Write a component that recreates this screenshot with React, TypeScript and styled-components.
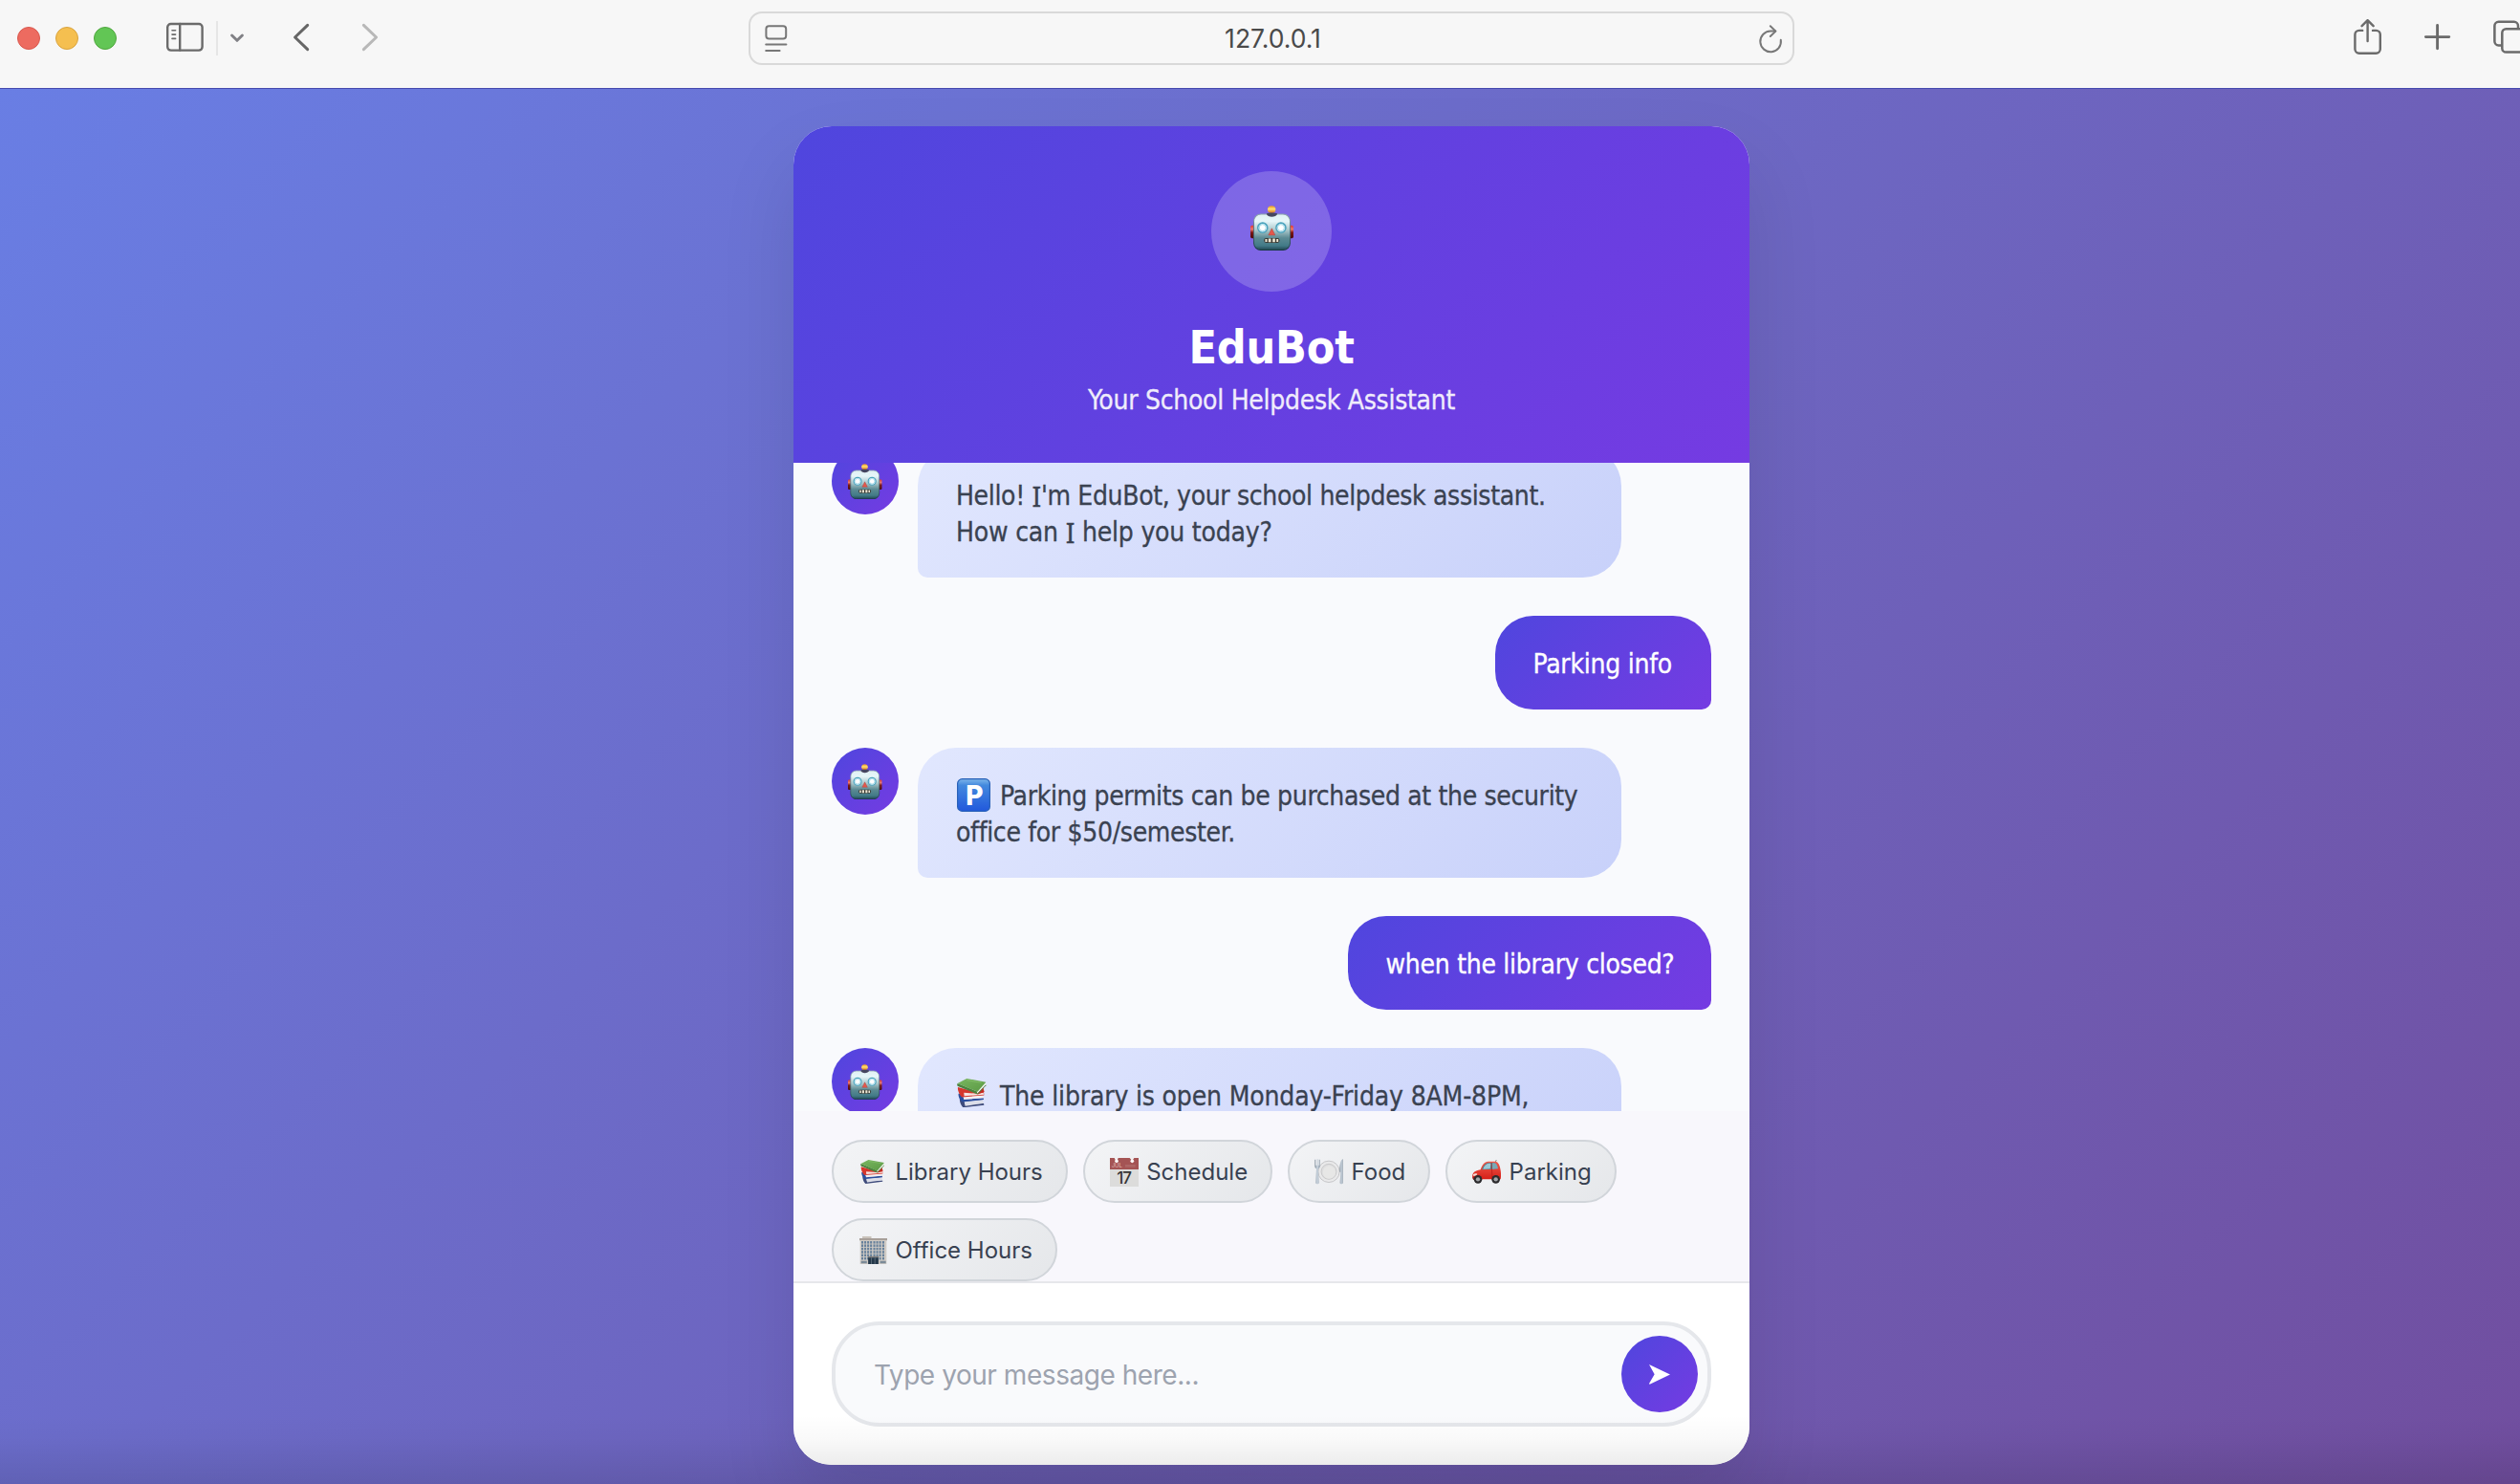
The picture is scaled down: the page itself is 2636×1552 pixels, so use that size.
import React from "react";
import styled, { createGlobalStyle } from "styled-components";

const chatFont = `"DejaVu Sans Condensed", "DejaVu Sans", "Noto Sans", sans-serif`;
const uiFont = `Inter, "Liberation Sans", sans-serif`;
const brand = "linear-gradient(135deg, #4f46de 0%, #753be2 100%)";

const GlobalStyle = createGlobalStyle`
  * { box-sizing: border-box; }
  html, body { margin: 0; padding: 0; overflow: hidden; }
  svg { display: block; flex-shrink: 0; }
`;

const Window = styled.div`
  position: relative;
  display: flex;
  flex-direction: column;
  width: 2636px;
  height: 1552px;
  overflow: hidden;
  font-family: ${uiFont};
`;

/* ---------- browser toolbar ---------- */

const Toolbar = styled.header`
  display: flex;
  align-items: center;
  height: 92px;
  flex-shrink: 0;
  padding: 0 0 12px 18px;
  background: #f7f7f7;
  overflow: hidden;
`;

const Lights = styled.div`
  display: flex;
  gap: 16px;
`;

const Light = styled.span<{ $fill: string; $edge: string }>`
  width: 24px;
  height: 24px;
  border-radius: 50%;
  background: ${(p) => p.$fill};
  border: 1px solid ${(p) => p.$edge};
`;

const ToolSlot = styled.div<{ $before: number; $color?: string }>`
  flex-shrink: 0;
  margin-left: ${(p) => p.$before}px;
  color: ${(p) => p.$color ?? "#6b6b6b"};
`;

const ToolDivider = styled.span`
  flex-shrink: 0;
  width: 2px;
  height: 36px;
  margin-left: 10px;
  background: #e6e6e6;
`;

const AddressBar = styled.div`
  display: flex;
  align-items: center;
  justify-content: space-between;
  flex-shrink: 0;
  width: 1094px;
  height: 56px;
  margin-left: 387px;
  padding: 0 10px 0 15px;
  border: 2px solid #d9d9d9;
  border-radius: 14px;
  color: #4a4a4a;
  font-size: 26.5px;
`;

const stroke = {
  fill: "none",
  stroke: "currentColor",
  strokeLinecap: "round" as const,
  strokeLinejoin: "round" as const,
};

const SidebarIcon = () => (
  <svg width="44" height="40" viewBox="172 20 44 40" {...stroke} strokeWidth="2.4">
    <rect x="175.2" y="25" width="36.4" height="27.6" rx="3.6" />
    <path d="M188.2 25V52.6" />
    <path d="M180 31.7h3.6M180 36.1h3.6M180 40.4h3.6" strokeWidth="1.6" />
  </svg>
);
const ChevronDownIcon = () => (
  <svg width="16" height="40" viewBox="240 20 16 40" {...stroke} strokeWidth="3">
    <path d="M242.6 37l5.4 5.3 5.4-5.3" />
  </svg>
);
const BackIcon = () => (
  <svg width="18" height="40" viewBox="306 20 18 40" {...stroke} strokeWidth="3">
    <path d="M321.7 26.3L308.6 39l13.1 12.7" />
  </svg>
);
const ForwardIcon = () => (
  <svg width="18" height="40" viewBox="378 20 18 40" {...stroke} strokeWidth="3">
    <path d="M380.4 26.3L393.6 39l-13.2 12.7" />
  </svg>
);
const SiteIcon = () => (
  <svg width="24" height="40" viewBox="800 20 24 40" {...stroke} strokeWidth="2">
    <rect x="801.4" y="27.2" width="20.8" height="13.2" rx="3" />
    <path d="M801.2 46.4h21.2M801.2 53h14.4" />
  </svg>
);
const ReloadIcon = () => (
  <svg width="26" height="40" viewBox="1839 20 26 40" {...stroke} strokeWidth="2">
    <path d="M1862.8 41.8a10.8 10.8 0 1 1-10.8-9.2h5.2" />
    <path d="M1851.8 27.2l5.6 5.4-5.6 5.4" />
  </svg>
);
const ShareIcon = () => (
  <svg width="32" height="40" viewBox="2460 20 32 40" {...stroke} strokeWidth="2.4">
    <path d="M2471.2 31.9h-3.4a4.4 4.4 0 0 0-4.4 4.4v15a4.4 4.4 0 0 0 4.4 4.4h17.6a4.4 4.4 0 0 0 4.4-4.4v-15a4.4 4.4 0 0 0-4.4-4.4h-3.4" />
    <path d="M2476.6 43V21.6M2470.6 27.2l6-6 6 6" />
  </svg>
);
const PlusIcon = () => (
  <svg width="32" height="40" viewBox="2534 20 32 40" {...stroke} strokeWidth="2.9">
    <path d="M2549.6 26.4v24.4M2537.4 38.6h24.4" />
  </svg>
);
const TabsIcon = () => (
  <svg width="30" height="40" viewBox="2606 20 30 40" {...stroke} strokeWidth="2.5">
    <path d="M2616 47.4h-2.4a4.2 4.2 0 0 1-4.2-4.2V27a4.2 4.2 0 0 1 4.2-4.2h16.2a4.2 4.2 0 0 1 4.2 4.2v2.4" />
    <rect x="2617.3" y="30.2" width="25" height="24.4" rx="4.2" />
  </svg>
);

/* ---------- emoji artwork ---------- */

const HiddenSvg = styled.svg`
  position: absolute;
`;

const EmojiDefs = () => (
  <HiddenSvg width="0" height="0" aria-hidden>
    <defs>
      <linearGradient id="rbHead" x1="0" y1="0" x2="0" y2="1">
        <stop offset="0" stopColor="#dff0f3" />
        <stop offset="0.2" stopColor="#e6f6f9" />
        <stop offset="0.45" stopColor="#a9c6ca" />
        <stop offset="0.66" stopColor="#5c8b94" />
        <stop offset="0.88" stopColor="#427a87" />
        <stop offset="1" stopColor="#1f4652" />
      </linearGradient>
      <linearGradient id="rbEdge" x1="0" y1="0" x2="0" y2="1">
        <stop offset="0" stopColor="#8ba5ae" />
        <stop offset="1" stopColor="#193943" />
      </linearGradient>
      <linearGradient id="rbBall" x1="0" y1="0" x2="0" y2="1">
        <stop offset="0" stopColor="#e9911d" />
        <stop offset="0.45" stopColor="#ffe173" />
        <stop offset="1" stopColor="#d56d1a" />
      </linearGradient>
      <linearGradient id="rbEar" x1="0" y1="0" x2="0" y2="1">
        <stop offset="0" stopColor="#e2382f" />
        <stop offset="0.3" stopColor="#ea7a72" />
        <stop offset="0.55" stopColor="#7c1716" />
        <stop offset="1" stopColor="#4b0a0c" />
      </linearGradient>
      <linearGradient id="pkBlue" x1="0" y1="0" x2="0" y2="1">
        <stop offset="0" stopColor="#7fb6ea" />
        <stop offset="0.2" stopColor="#4389de" />
        <stop offset="1" stopColor="#2158dc" />
      </linearGradient>
      <linearGradient id="bkGreen" x1="0" y1="0" x2="1" y2="1">
        <stop offset="0" stopColor="#79b660" />
        <stop offset="1" stopColor="#5a9a44" />
      </linearGradient>
      <linearGradient id="carRed" x1="0" y1="0" x2="0" y2="1">
        <stop offset="0" stopColor="#ef5a4c" />
        <stop offset="1" stopColor="#d61f18" />
      </linearGradient>
      <linearGradient id="steel" x1="0" y1="0" x2="1" y2="0">
        <stop offset="0" stopColor="#7d8b98" />
        <stop offset="0.5" stopColor="#cfd9e3" />
        <stop offset="1" stopColor="#8796a4" />
      </linearGradient>
    </defs>
  </HiddenSvg>
);

const Robot = ({ width }: { width: number }) => (
  <svg width={width} height={(width * 140) / 134} viewBox="0 0 134 140" role="img" aria-label="robot">
    <ellipse cx="66" cy="12" rx="12.5" ry="11.5" fill="url(#rbBall)" />
    <rect x="0" y="62" width="14" height="40" rx="5" fill="url(#rbEar)" />
    <rect x="120" y="62" width="14" height="40" rx="5" fill="url(#rbEar)" />
    <rect x="10.5" y="26.5" width="113" height="112" rx="22" fill="url(#rbHead)" stroke="url(#rbEdge)" strokeWidth="3" />
    <path d="M50 25c3 13 30 13 34 0-8-4-26-4-34 0z" fill="#45465f" />
    <circle cx="38" cy="69" r="15" fill="#e9f8fc" stroke="#4ba3bd" strokeWidth="4.5" />
    <circle cx="38" cy="69" r="10.5" fill="#fff" stroke="#8fd0e2" strokeWidth="2.5" />
    <circle cx="95" cy="69" r="15" fill="#e9f8fc" stroke="#4ba3bd" strokeWidth="4.5" />
    <circle cx="95" cy="69" r="10.5" fill="#fff" stroke="#8fd0e2" strokeWidth="2.5" />
    <path d="M66.500 71L77 92H56z" fill="#e4574c" stroke="#a8463f" strokeWidth="1.500" />
    <rect x="42" y="101" width="49" height="15" rx="7" fill="#393b35" />
    <path d="M46 104h6v9h-6zM56 103h8v11h-8zM69 103h8v11h-8zM81 104h6v9h-6z" fill="#ece6d3" />
  </svg>
);

const Books = ({ width }: { width: number }) => (
  <svg width={width} height={(width * 92) / 94} viewBox="0 0 94 92" role="img" aria-label="books">
    <path d="M9 64c-2 6 4 24 11 28l66-8-1-5-60 3-2-10 60-5z" fill="#3f4c7c" />
    <path d="M24 74l58-6 3 10-59 9z" fill="#dcdee8" />
    <path d="M5 48c-2 7 4 22 12 26l68-7-1-5-62 4-2-9 62-5z" fill="#2b4f9f" />
    <path d="M20 57l62-5 2 9-62 6z" fill="#f3eef0" />
    <path d="M3 27c-2 9 5 26 13 32l70-6-2-26-22 16z" fill="#d5372c" />
    <path d="M22 45l44 3 18-3 1 6-62 4z" fill="#f4e4e2" />
    <path d="M62 44l22-10 3 8-21 8z" fill="#c32b22" />
    <path d="M2 15c-2 3-1 7 1 9l62 26-1-9z" fill="#4b823d" />
    <path d="M64 41L92 12v8L66 47c-3-1-3-4-2-6z" fill="#f4f4f1" />
    <path d="M65 47L92 19v3L66 50z" fill="#4a7f3c" />
    <path d="M31 0L92 11 65 42 2 15z" fill="url(#bkGreen)" />
    <path d="M31 5L78 13" stroke="#8dc672" strokeWidth="2" />
  </svg>
);

const EmojiText = styled.text<{ $size: number; $weight?: number }>`
  font-family: ${uiFont};
  font-size: ${(p) => p.$size}px;
  font-weight: ${(p) => p.$weight ?? 400};
`;

const Calendar = () => (
  <svg width="30" height="30" viewBox="0 0 90 90" role="img" aria-label="calendar">
    <rect width="90" height="90" fill="#dcdcdb" />
    <rect width="90" height="36" fill="#a45454" />
    <path d="M14 0h12l-3 8h-5zM62 0h14l-6 9z" fill="#f4f0f0" />
    <circle cx="21" cy="10" r="5.500" fill="#fbf9f9" />
    <circle cx="70" cy="10" r="5.500" fill="#fbf9f9" />
    <path d="M48 21h32v8H48z" fill="#ad6665" />
    <EmojiText $size={18} x="5" y="31" fill="#e2b9b7">JUL</EmojiText>
    <EmojiText $size={51} $weight={500} x="44" y="81" textAnchor="middle" fill="#353535" letterSpacing="-3">17</EmojiText>
  </svg>
);

const Plate = () => (
  <svg width="30" height="27" viewBox="0 0 90 81" role="img" aria-label="plate">
    <circle cx="45" cy="40" r="33.500" fill="#e9e9ea" stroke="#bebec0" strokeWidth="2.5" />
    <circle cx="45" cy="40" r="24" fill="#dededf" stroke="#bcbcbc" strokeWidth="2" />
    <circle cx="46" cy="42" r="20" fill="#e7e7e6" />
    <path d="M1 2v20c0 6 3 8 5 9L4 74c0 6 10 6 10 0l-2-43c3-1 5-4 5-9V2h-3v18h-3V1H8v19H4V2z" fill="url(#steel)" />
    <path d="M88 1c-7 4-9 20-9 40h3l-2 34c0 5 9 5 9 0V1z" fill="url(#steel)" />
  </svg>
);

const Car = () => (
  <svg width="30" height="25" viewBox="0 0 90 75" role="img" aria-label="car">
    <path d="M73 6l3-6" stroke="#555" strokeWidth="2" />
    <path d="M3 42c4-6 14-9 23-11C31 16 38 6 50 5h22c10 1 15 12 17 28 2 12 1 22 0 28H4C0 58-1 48 3 42z" fill="url(#carRed)" />
    <path d="M30 31C34 18 41 10 51 9h19l4 19c-14 2-30 2-44 3z" fill="#56808f" />
    <path d="M34 29C38 18 44 12 52 11h7l-3 17z" fill="#9cc8d6" />
    <path d="M63 10h8c6 2 9 10 10 18l-18 1z" fill="#7aa8b6" />
    <path d="M60 9l3 48" stroke="#b51813" strokeWidth="2" />
    <path d="M3 46c4-4 9-4 13-2-2 5-8 7-13 6z" fill="#f3dcd6" />
    <path d="M1 55h18v7H3z" fill="#802020" />
    <circle cx="18" cy="61" r="13" fill="#2c2b2d" />
    <circle cx="18" cy="61" r="6.500" fill="#a2a5a8" />
    <circle cx="74" cy="61" r="13" fill="#2c2b2d" />
    <circle cx="74" cy="61" r="6.500" fill="#a2a5a8" />
  </svg>
);

const Office = () => (
  <svg width="29" height="29" viewBox="0 0 86 86" role="img" aria-label="office">
    <rect x="9" y="0" width="28" height="9" fill="#c9c3bb" />
    <rect x="0" y="6" width="86" height="7" fill="#a79f98" />
    <rect x="2" y="12" width="82" height="74" fill="#cfcac4" />
    {[15, 25, 35, 45, 55, 65].map((y) => (
      <g key={y} fill="#66809b">
        {[6, 15, 24, 33, 43, 52, 61, 71].map((x) => (
          <rect key={x} x={x} y={y} width="6" height="7.500" />
        ))}
      </g>
    ))}
    <rect x="26" y="62" width="34" height="4" fill="#807b78" />
    <rect x="27" y="66" width="32" height="20" fill="#24384a" />
    <path d="M37 66v20M48 66v20" stroke="#75828c" strokeWidth="2" />
    <path d="M5 76h18v8H5zM64 76h18v8H64z" fill="#7b8b98" />
  </svg>
);

const ParkingSign = () => (
  <svg width="35" height="35" viewBox="0 0 35 35" role="img" aria-label="parking">
    <rect x="0.600" y="0.600" width="33.800" height="33.800" rx="5" fill="url(#pkBlue)" stroke="#2a62b8" strokeWidth="1.200" />
    <EmojiText $size={28} $weight={800} x="18.300" y="27.600" textAnchor="middle" fill="#fff">P</EmojiText>
  </svg>
);

/* ---------- page and card ---------- */

const Page = styled.main`
  display: flex;
  justify-content: center;
  flex: 1;
  min-height: 0;
  padding-top: 39px;
  border-top: 1px solid #4549ae;
  background: linear-gradient(135deg, #697ee4 0%, #714e9f 100%);
`;

const Card = styled.section`
  display: flex;
  flex-direction: column;
  width: 1000px;
  height: 1400px;
  margin-left: 24px;
  border-radius: 40px;
  overflow: hidden;
  background: #fff;
  box-shadow: 0 40px 80px rgba(0, 0, 0, 0.1);
`;

const CardHeader = styled.div`
  display: flex;
  flex-direction: column;
  align-items: center;
  height: 352px;
  flex-shrink: 0;
  padding-top: 47px;
  background: ${brand};
  color: #fff;
  font-family: ${chatFont};
`;

const Mascot = styled.div`
  display: flex;
  align-items: center;
  justify-content: center;
  width: 126px;
  height: 126px;
  padding-bottom: 7px;
  border-radius: 50%;
  background: rgba(255, 255, 255, 0.2);
`;

const Title = styled.h1`
  margin: 29px 0 0;
  font-size: 48px;
  line-height: 58px;
  font-weight: 700;
  letter-spacing: -0.2px;
`;

const Subtitle = styled.p`
  margin: 10px 0 0;
  font-size: 28px;
  line-height: 34px;
  letter-spacing: -0.28px;
  -webkit-text-stroke: 0.3px currentColor;
  opacity: 0.9;
`;

const Messages = styled.div`
  height: 678px;
  flex-shrink: 0;
  overflow: hidden;
  padding: 0 40px;
  background: #f9fafd;
`;

const Thread = styled.div`
  display: flex;
  flex-direction: column;
  gap: 40px;
  margin-top: -16px;
`;

const MessageRow = styled.div<{ $own: boolean }>`
  display: flex;
  gap: 20px;
  justify-content: ${(p) => (p.$own ? "flex-end" : "flex-start")};
`;

const Avatar = styled.div`
  display: flex;
  align-items: center;
  justify-content: center;
  width: 70px;
  height: 70px;
  padding-top: 1px;
  flex-shrink: 0;
  border-radius: 50%;
  background: ${brand};
`;

const BotBubble = styled.div`
  width: 736px;
  height: 136px;
  padding: 32px 30px 28px 40px;
  border-radius: 40px 40px 40px 10px;
  background: linear-gradient(135deg, #e1e7fe 0%, #c8d1fa 100%);
  color: #3a4251;
  font-family: ${chatFont};
`;

const OwnBubble = styled.div<{ $width: number }>`
  width: ${(p) => p.$width}px;
  height: 98px;
  padding: 32px 0 28px 39.5px;
  border-radius: 40px 40px 10px 40px;
  background: ${brand};
  color: #fff;
  font-family: ${chatFont};
`;

const Line = styled.div<{ $tracking: number }>`
  display: flex;
  height: 38px;
  font-size: 28px;
  line-height: 38px;
  letter-spacing: ${(p) => p.$tracking}px;
  white-space: pre;
  -webkit-text-stroke: 0.3px currentColor;
`;

const SerifI = styled.span`
  font-family: "Noto Sans", sans-serif;
  font-size: 28.6px;
`;

const LineEmoji = styled.span`
  display: flex;
  width: 46px;
  height: 36px;
  padding-left: 1px;
  -webkit-text-stroke: 0;
`;

const QuickReplies = styled.div`
  display: flex;
  flex-wrap: wrap;
  align-content: flex-start;
  gap: 16px;
  height: 178px;
  flex-shrink: 0;
  padding: 30px 40px 0;
  background: #f8f7fc;
`;

const QuickButton = styled.button`
  display: flex;
  align-items: center;
  height: 66px;
  padding: 1px 24px 0;
  border: 2px solid #d1d5da;
  border-radius: 33px;
  background: linear-gradient(135deg, #f3f4f6 0%, #e5e7ea 100%);
  color: #384151;
  font-family: ${uiFont};
  font-size: 24px;
  line-height: 30px;
  white-space: nowrap;
`;

const QuickIcon = styled.span`
  display: flex;
  justify-content: center;
  width: 34px;
  margin-right: 6.4px;
`;

const Composer = styled.div`
  height: 192px;
  flex-shrink: 0;
  padding: 40px;
  border-top: 2px solid #e6e7eb;
  background: #fff;
`;

const InputShell = styled.div`
  display: flex;
  align-items: center;
  height: 110px;
  padding: 0 10px 0 40px;
  border: 4px solid #e5e7eb;
  border-radius: 50px;
  background: #f9fafc;
`;

const TextInput = styled.input`
  flex: 1;
  min-width: 0;
  padding: 1px 0 0;
  border: 0;
  outline: 0;
  background: transparent;
  font-family: ${uiFont};
  font-size: 28px;
  letter-spacing: -0.45px;
  &::placeholder {
    color: #9da3af;
    opacity: 1;
  }
`;

const SendButton = styled.button`
  display: flex;
  align-items: center;
  justify-content: center;
  width: 80px;
  height: 80px;
  padding: 1px 0 0;
  border: 0;
  border-radius: 50%;
  background: ${brand};
`;

const BottomShade = styled.div`
  position: absolute;
  left: 0;
  right: 0;
  bottom: 0;
  height: 72px;
  background: linear-gradient(to bottom, rgba(0, 0, 0, 0) 0%, rgba(0, 0, 0, 0.025) 35%, rgba(0, 0, 0, 0.11) 100%);
  pointer-events: none;
`;

const quick: [string, React.ReactNode][] = [
  ["Library Hours", <Books width={25.5} />],
  ["Schedule", <Calendar />],
  ["Food", <Plate />],
  ["Parking", <Car />],
  ["Office Hours", <Office />],
];

const BotMessage = ({ children }: { children: React.ReactNode }) => (
  <MessageRow $own={false}>
    <Avatar><Robot width={35.5} /></Avatar>
    <BotBubble>{children}</BotBubble>
  </MessageRow>
);

export default function App() {
  return (
    <Window>
      <GlobalStyle />
      <EmojiDefs />
      <Toolbar>
        <Lights>
          <Light $fill="#ed6b60" $edge="#d9584e" />
          <Light $fill="#f5bf50" $edge="#d9a33e" />
          <Light $fill="#62c655" $edge="#4fa73e" />
        </Lights>
        <ToolSlot $before={50}><SidebarIcon /></ToolSlot>
        <ToolDivider />
        <ToolSlot $before={12} $color="#808085"><ChevronDownIcon /></ToolSlot>
        <ToolSlot $before={50} $color="#666"><BackIcon /></ToolSlot>
        <ToolSlot $before={54} $color="#b8b8b8"><ForwardIcon /></ToolSlot>
        <AddressBar>
          <ToolSlot $before={0} $color="#777"><SiteIcon /></ToolSlot>
          <span>127.0.0.1</span>
          <ToolSlot $before={0} $color="#777"><ReloadIcon /></ToolSlot>
        </AddressBar>
        <ToolSlot $before={583}><ShareIcon /></ToolSlot>
        <ToolSlot $before={42}><PlusIcon /></ToolSlot>
        <ToolSlot $before={40}><TabsIcon /></ToolSlot>
      </Toolbar>
      <Page>
        <Card>
          <CardHeader>
            <Mascot><Robot width={45} /></Mascot>
            <Title>EduBot</Title>
            <Subtitle>Your School Helpdesk Assistant</Subtitle>
          </CardHeader>
          <Messages>
            <Thread>
              <BotMessage>
                <Line $tracking={-0.34}>Hello! <SerifI>I</SerifI>'m EduBot, your school helpdesk assistant.</Line>
                <Line $tracking={-0.2}>How can <SerifI>I</SerifI> help you today?</Line>
              </BotMessage>
              <MessageRow $own>
                <OwnBubble $width={226}><Line $tracking={-0.25}>Parking info</Line></OwnBubble>
              </MessageRow>
              <BotMessage>
                <Line $tracking={-0.34}><LineEmoji><ParkingSign /></LineEmoji>Parking permits can be purchased at the security</Line>
                <Line $tracking={-0.32}>office for $50/semester.</Line>
              </BotMessage>
              <MessageRow $own>
                <OwnBubble $width={380}><Line $tracking={-0.28}>when the library closed?</Line></OwnBubble>
              </MessageRow>
              <BotMessage>
                <Line $tracking={-0.16}><LineEmoji><Books width={31} /></LineEmoji>The library is open Monday-Friday 8AM-8PM,</Line>
              </BotMessage>
            </Thread>
          </Messages>
          <QuickReplies>
            {quick.map(([label, icon]) => (
              <QuickButton key={label}><QuickIcon>{icon}</QuickIcon>{label}</QuickButton>
            ))}
          </QuickReplies>
          <Composer>
            <InputShell>
              <TextInput placeholder="Type your message here..." />
              <SendButton aria-label="Send">
                <svg width="22" height="21" viewBox="0 0 66 63"><path d="M0 0L66 31.500 2 62 0 60 17 31z" fill="#fff" /></svg>
              </SendButton>
            </InputShell>
          </Composer>
        </Card>
      </Page>
      <BottomShade />
    </Window>
  );
}
